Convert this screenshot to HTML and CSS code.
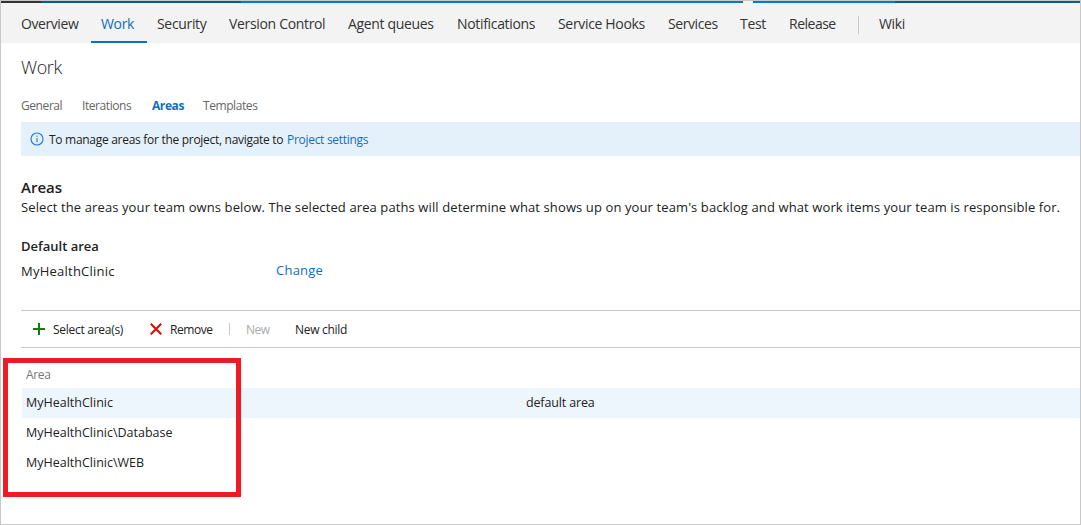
FILE: index.html
```html
<!DOCTYPE html>
<html lang="en">
<head>
<meta charset="utf-8">
<title>Work - Areas</title>
<link rel="stylesheet" href="styles.css">
</head>
<body>
<div class="page">
  <div class="strip"><i class="strip-dark"></i><i class="strip-navy"></i><i class="strip-blue"></i><i class="strip-navy-end"></i><span class="notch"></span></div>
  <nav class="hubs">
    <a class="hub overview">Overview</a>
    <a class="hub work selected">Work</a>
    <a class="hub security">Security</a>
    <a class="hub version">Version Control</a>
    <a class="hub queues">Agent queues</a>
    <a class="hub notifications">Notifications</a>
    <a class="hub hooks">Service Hooks</a>
    <a class="hub services">Services</a>
    <a class="hub test">Test</a>
    <a class="hub release">Release</a>
    <span class="hub-separator"></span>
    <a class="hub wiki">Wiki</a>
  </nav>
  <main class="content">
    <h1 class="title">Work</h1>
    <div class="tabs">
      <a class="tab general">General</a>
      <a class="tab iterations">Iterations</a>
      <a class="tab areas active">Areas</a>
      <a class="tab templates">Templates</a>
    </div>
    <div class="banner">
      <svg class="info" width="14" height="14" viewBox="0 0 14 14"><circle cx="7" cy="7" r="6" fill="none" stroke="#2b7de0" stroke-width="1.2"/><path d="M7 6v4.2M7 3.5v1.3" stroke="#2b7de0" fill="none" stroke-width="1.2"/></svg>
      <span class="banner-text">To manage areas for the project, navigate to</span><a class="banner-link">Project settings</a>
    </div>
    <h2 class="heading">Areas</h2>
    <p class="description">Select the areas your team owns below. The selected area paths will determine what shows up on your team's backlog and what work items your team is responsible for.</p>
    <h3 class="subheading">Default area</h3>
    <div class="default-row"><span class="default-name">MyHealthClinic</span><a class="change">Change</a></div>
    <div class="toolbar">
      <svg class="plus" width="12" height="12" viewBox="0 0 12 12"><path d="M6 0v12M0 6h12" stroke="#107c10" stroke-width="2"/></svg>
      <span class="select-areas">Select area(s)</span>
      <svg class="cross" width="12" height="12" viewBox="0 0 12 12"><path d="M.8.8l10.4 10.4M11.2.8L.8 11.2" stroke="#da0a00" stroke-width="2"/></svg>
      <span class="remove">Remove</span>
      <span class="tool-separator"></span>
      <span class="new">New</span>
      <span class="new-child">New child</span>
    </div>
    <div class="grid">
      <div class="grid-header">Area</div>
      <div class="grid-row current"><span class="cell">MyHealthClinic</span><span class="note">default area</span></div>
      <div class="grid-row"><span class="cell">MyHealthClinic\Database</span></div>
      <div class="grid-row"><span class="cell">MyHealthClinic\WEB</span></div>
      <div class="highlight"></div>
    </div>
  </main>
</div>
</body>
</html>
```
FILE: styles.css
```css
* { box-sizing: border-box; }
body { margin: 0; font-family: "Open Sans", "Noto Sans", sans-serif; color: #212121; }
.page { width: 1081px; height: 525px; border: 1px solid #c8c8c8; background: #fff; overflow: hidden; }
.strip { position: relative; display: flex; height: 2px; background: #0078d7; }
.strip-dark { width: 40px; background: #333; }
.strip-navy { width: 200px; background: #005a9e; }
.strip-blue { flex: 1; }
.strip-navy-end { width: 185px; background: #005a9e; }
.notch { position: absolute; left: 742px; top: 0; width: 10px; height: 2px; background: #f3f3f3; }
.hubs { display: flex; height: 40px; padding-left: 9px; background: #f3f3f3; font-size: 14px; line-height: 19px; letter-spacing: -0.33px; white-space: nowrap; }
.hub { flex: none; padding: 11px 0 0 11px; height: 40px; color: #333; }
.overview { width: 81px; letter-spacing: -0.42px; }
.work { width: 56px; padding-left: 10px; }
.security { width: 71px; padding-left: 10px; }
.version { width: 119px; }
.queues { width: 109px; }
.notifications { width: 101px; }
.hooks { width: 110px; }
.services { width: 72px; letter-spacing: -0.42px; }
.test { width: 49px; }
.release { width: 80px; letter-spacing: -0.5px; }
.selected { border-bottom: 2px solid #106ebe; color: #106ebe; }
.hub-separator { width: 1px; height: 18px; margin: 13px 9px 0 0; background: #c8c8c8; }
.content { padding-left: 20px; white-space: nowrap; }
h1, h2, h3, p { margin: 0; }
.title { height: 53px; padding-top: 11px; font-size: 18px; line-height: 26px; font-weight: 300; letter-spacing: -0.4px; color: #222; }
.tabs { display: flex; height: 26px; font-size: 12px; line-height: 20px; letter-spacing: -0.42px; color: #666; }
.general { width: 61px; }
.iterations { width: 70px; }
.areas { width: 51px; }
.active { color: #106ebe; font-weight: 700; }
.banner { display: flex; align-items: center; height: 34px; padding-left: 9px; background: #e4f1fb; font-size: 12px; letter-spacing: -0.29px; }
.info { margin-right: 5px; }
.banner-text { width: 238px; }
.banner-link, .change { color: #106ebe; }
.heading { margin-top: 21px; font-size: 15px; line-height: 20px; font-weight: 600; }
.description { margin-top: 1px; font-size: 13px; line-height: 18px; letter-spacing: 0.108px; }
.subheading { margin-top: 20px; font-size: 13px; line-height: 20px; font-weight: 600; }
.default-row { display: flex; margin-top: 4px; height: 50px; font-size: 13px; line-height: 20px; letter-spacing: 0.24px; }
.default-name { width: 255px; padding-top: 1px; }
.toolbar { display: flex; align-items: center; height: 38px; padding-left: 12px; border-top: 1px solid #c8c8c8; border-bottom: 1px solid #c8c8c8; font-size: 12px; letter-spacing: -0.28px; }
.plus { margin-right: 8px; }
.select-areas { width: 97px; }
.cross { margin-right: 8px; }
.remove { width: 59px; letter-spacing: -0.42px; }
.tool-separator { width: 1px; height: 12px; margin-right: 16px; background: #c8c8c8; }
.new { width: 49px; letter-spacing: -0.5px; color: #aaa; }
.grid { position: relative; padding: 17px 0 0 1px; font-size: 12.5px; }
.grid-header { height: 23px; padding-left: 4px; font-size: 12px; line-height: 20px; letter-spacing: -0.35px; color: #767676; }
.grid-row { display: flex; height: 30px; padding-left: 4px; line-height: 29px; }
.current { background: #eef6fd; }
.cell { width: 500px; }
.note { letter-spacing: -0.15px; }
.highlight { position: absolute; left: -18px; top: 10px; width: 238px; height: 139px; border: 5px solid #ed1c24; }
```
